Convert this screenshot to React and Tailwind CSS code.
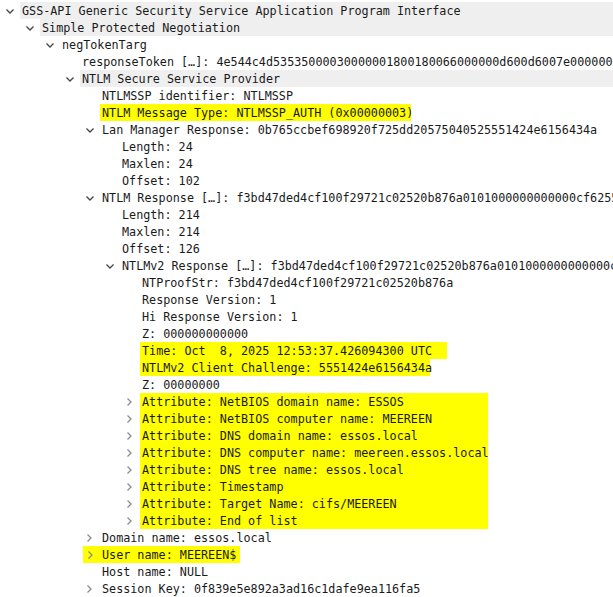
import React from "react";

const indent = ["pl-0", "pl-5", "pl-10", "pl-15", "pl-20", "pl-25", "pl-30"];

// level, state (o = open, c = closed, n = leaf), text, mark
const rows = [
  [0, "o", "GSS-API Generic Security Service Application Program Interface", "gray"],
  [1, "o", "Simple Protected Negotiation", "gray"],
  [2, "o", "negTokenTarg"],
  [3, "n", "responseToken […]: 4e544c4d53535000030000001800180066000000d600d6007e00000018001800"],
  [3, "o", "NTLM Secure Service Provider", "gray"],
  [4, "n", "NTLMSSP identifier: NTLMSSP"],
  [4, "n", "NTLM Message Type: NTLMSSP_AUTH (0x00000003)", "w-[311px]"],
  [4, "o", "Lan Manager Response: 0b765ccbef698920f725dd20575040525551424e6156434a"],
  [5, "n", "Length: 24"],
  [5, "n", "Maxlen: 24"],
  [5, "n", "Offset: 102"],
  [4, "o", "NTLM Response […]: f3bd47ded4cf100f29721c02520b876a0101000000000000cf6255a1b2c3"],
  [5, "n", "Length: 214"],
  [5, "n", "Maxlen: 214"],
  [5, "n", "Offset: 126"],
  [5, "o", "NTLMv2 Response […]: f3bd47ded4cf100f29721c02520b876a0101000000000000cf6255a1"],
  [6, "n", "NTProofStr: f3bd47ded4cf100f29721c02520b876a"],
  [6, "n", "Response Version: 1"],
  [6, "n", "Hi Response Version: 1"],
  [6, "n", "Z: 000000000000"],
  [6, "n", "Time: Oct  8, 2025 12:53:37.426094300 UTC", "w-[307px]"],
  [6, "n", "NTLMv2 Client Challenge: 5551424e6156434a", "w-[290px]"],
  [6, "n", "Z: 00000000"],
  [6, "c", "Attribute: NetBIOS domain name: ESSOS", "w-[348px]"],
  [6, "c", "Attribute: NetBIOS computer name: MEEREEN", "w-[348px]"],
  [6, "c", "Attribute: DNS domain name: essos.local", "w-[348px]"],
  [6, "c", "Attribute: DNS computer name: meereen.essos.local", "w-[348px]"],
  [6, "c", "Attribute: DNS tree name: essos.local", "w-[348px]"],
  [6, "c", "Attribute: Timestamp", "w-[348px]"],
  [6, "c", "Attribute: Target Name: cifs/MEEREEN", "w-[348px]"],
  [6, "c", "Attribute: End of list", "w-[348px]"],
  [4, "c", "Domain name: essos.local"],
  [4, "c", "User name: MEEREEN$", "user"],
  [4, "n", "Host name: NULL"],
  [4, "c", "Session Key: 0f839e5e892a3ad16c1dafe9ea116fa5"],
];

function Chevron({ state }) {
  if (state === "o") {
    return (
      <svg width="10" height="10" viewBox="0 0 10 10" className="shrink-0">
        <polyline points="1.5,3.5 5,7 8.5,3.5" fill="none" stroke="#444" strokeWidth="1.3" />
      </svg>
    );
  }
  if (state === "c") {
    return (
      <svg width="10" height="10" viewBox="0 0 10 10" className="shrink-0 -ml-[3px]">
        <polyline points="3.5,1.5 7,5 3.5,8.5" fill="none" stroke="#8c8c8c" strokeWidth="1.3" />
      </svg>
    );
  }
  return null;
}

function Row({ level, state, text, mark }) {
  if (mark === "user") {
    return (
      <div className={`flex h-[17px] items-center ${indent[level]}`}>
        <div className="ml-[3px] flex h-full w-[157px] items-center bg-[#ffff00]">
          <div className="flex w-[17px] items-center justify-center">
            <Chevron state={state} />
          </div>
          <div className="pl-[2px]">{text}</div>
        </div>
      </div>
    );
  }

  let textCls = "pl-[2px] h-full";
  if (mark === "gray") textCls += " flex-1 bg-[#efefef]";
  else if (mark) textCls += ` bg-[#ffff00] ${mark}`;

  return (
    <div className={`flex h-[17px] items-center ${indent[level]}`}>
      <div className="flex w-5 shrink-0 items-center justify-center">
        <Chevron state={state} />
      </div>
      <div className={textCls}>{text}</div>
    </div>
  );
}

export default function App() {
  return (
    <div className="h-[597px] w-[613px] overflow-hidden bg-white pt-[2px] font-['DejaVu_Sans_Mono',monospace] text-[11.75px] leading-[18px] text-[#1a1a1a] whitespace-pre">
      {rows.map(([level, state, text, mark], i) => (
        <Row key={i} level={level} state={state} text={text} mark={mark} />
      ))}
    </div>
  );
}
